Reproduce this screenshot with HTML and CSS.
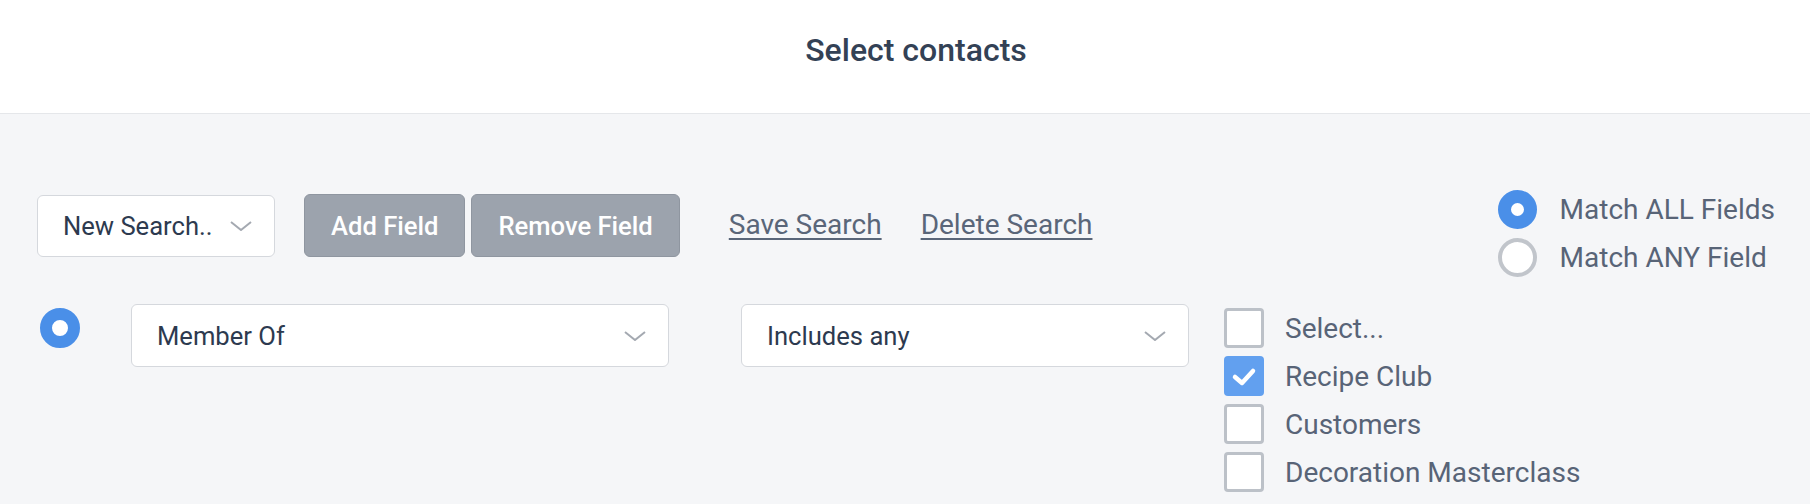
FILE: index.html
```html
<!DOCTYPE html>
<html lang="en">
<head>
    <meta charset="UTF-8">
    <meta name="viewport" content="width=device-width, initial-scale=1.0">
    <title>Select contacts</title>
    <link rel="stylesheet" href="styles.css">
</head>
<body>

<div class="header">
    <h1>Select contacts</h1>
</div>

<div id="content">
    <div class="toolbar">
        <div class="actions">
            <div class="select select-search">
                <span>New Search..</span>
                <svg class="chevron" viewBox="0 0 22 10"><polyline points="1,1 11,9 21,1"/></svg>
            </div>
            <div class="buttons">
                <button type="button" class="btn">Add Field</button>
                <button type="button" class="btn">Remove Field</button>
            </div>
            <a href="#" class="link link-save">Save Search</a>
            <a href="#" class="link">Delete Search</a>
        </div>

        <div class="match">
            <label class="option">
                <span class="radio radio-on"></span>
                <span>Match ALL Fields</span>
            </label>
            <label class="option">
                <span class="radio"></span>
                <span>Match ANY Field</span>
            </label>
        </div>
    </div>

    <div class="field-row">
        <span class="radio radio-on radio-row"></span>
        <div class="select select-field">
            <span>Member Of</span>
            <svg class="chevron" viewBox="0 0 22 10"><polyline points="1,1 11,9 21,1"/></svg>
        </div>
        <div class="select select-op">
            <span>Includes any</span>
            <svg class="chevron" viewBox="0 0 22 10"><polyline points="1,1 11,9 21,1"/></svg>
        </div>
        <div class="checklist">
            <label class="check-item">
                <span class="checkbox"></span>
                <span>Select...</span>
            </label>
            <label class="check-item">
                <span class="checkbox checked">
                    <svg viewBox="0 0 40 40"><polyline points="11,21 18,27 29,15"/></svg>
                </span>
                <span>Recipe Club</span>
            </label>
            <label class="check-item">
                <span class="checkbox"></span>
                <span>Customers</span>
            </label>
            <label class="check-item">
                <span class="checkbox"></span>
                <span>Decoration Masterclass</span>
            </label>
        </div>
    </div>
</div>

</body>
</html>
```

FILE: styles.css
```css
body {
    font-family: Roboto, "Liberation Sans", Arial, sans-serif;
    background-color: #f5f6f8;
    margin: 0;
    padding: 0;
}

.header {
    height: 114px;
    box-sizing: border-box;
    padding: 31px 0 0 22px;
    background-color: #fff;
    border-bottom: 1px solid #e5e7ea;
}

h1 {
    margin: 0;
    text-align: center;
    font-size: 32px;
    line-height: 1.2;
    font-weight: 500;
    color: #334155;
}

#content {
    padding: 76px 35px 0 37px;
}

.toolbar {
    display: flex;
    align-items: flex-start;
}

.actions {
    display: flex;
    align-items: center;
    margin-top: 4px;
    height: 63px;
}

.select {
    display: flex;
    align-items: center;
    justify-content: space-between;
    box-sizing: border-box;
    background-color: #fff;
    border: 1px solid #d5d8dd;
    border-radius: 6px;
    padding: 0 22px 0 25px;
    font-size: 25.6px;
    color: #2d3a4f;
}

.select-search {
    width: 238px;
    height: 62px;
    padding-left: 25px;
}

.chevron {
    width: 22px;
    height: 10px;
    fill: none;
    stroke: #a4a9b1;
    stroke-width: 2;
}

.buttons {
    display: flex;
    gap: 6px;
    margin-left: 29px;
}

.btn {
    height: 63px;
    padding: 0 26px;
    background-color: #9ca3ad;
    border: 1px solid #8f96a0;
    border-radius: 6px;
    color: #fff;
    font-family: inherit;
    font-size: 25.6px;
    font-weight: 500;
    cursor: pointer;
}

.link {
    font-size: 28px;
    color: #5a6679;
    text-decoration: underline;
    text-underline-offset: 4px;
    margin-left: 39px;
    margin-bottom: 3px;
}

.link-save {
    margin-left: 49px;
}

.match {
    margin-left: auto;
    display: flex;
    flex-direction: column;
    gap: 9px;
}

.option {
    display: flex;
    align-items: center;
    gap: 23px;
    height: 39px;
    font-size: 28px;
    color: #586477;
}

.radio {
    display: block;
    box-sizing: border-box;
    width: 39px;
    height: 39px;
    border-radius: 50%;
    border: 4px solid #c1c5cb;
    background-color: #fff;
}

.radio-on {
    border: 13px solid #4a8fe8;
}

.field-row {
    display: flex;
    align-items: flex-start;
    margin-top: 27px;
}

.radio-row {
    width: 40px;
    height: 40px;
    border-width: 12px;
    margin: 4px 0 0 3px;
}

.select-field {
    width: 538px;
    height: 63px;
    margin-left: 51px;
}

.select-op {
    width: 448px;
    height: 63px;
    margin-left: 72px;
}

.checklist {
    margin: 4px 0 0 35px;
    display: flex;
    flex-direction: column;
    gap: 8px;
}

.check-item {
    display: flex;
    align-items: center;
    gap: 21px;
    height: 40px;
    font-size: 28px;
    color: #586477;
}

.checkbox {
    display: block;
    box-sizing: border-box;
    width: 40px;
    height: 40px;
    border: 3px solid #bcc1c8;
    border-radius: 4px;
    background-color: #fff;
}

.checkbox.checked {
    border: none;
    background-color: #62a0ef;
}

.checkbox svg {
    display: block;
    width: 40px;
    height: 40px;
    fill: none;
    stroke: #fff;
    stroke-width: 4.5;
    stroke-linecap: round;
    stroke-linejoin: round;
}
```
